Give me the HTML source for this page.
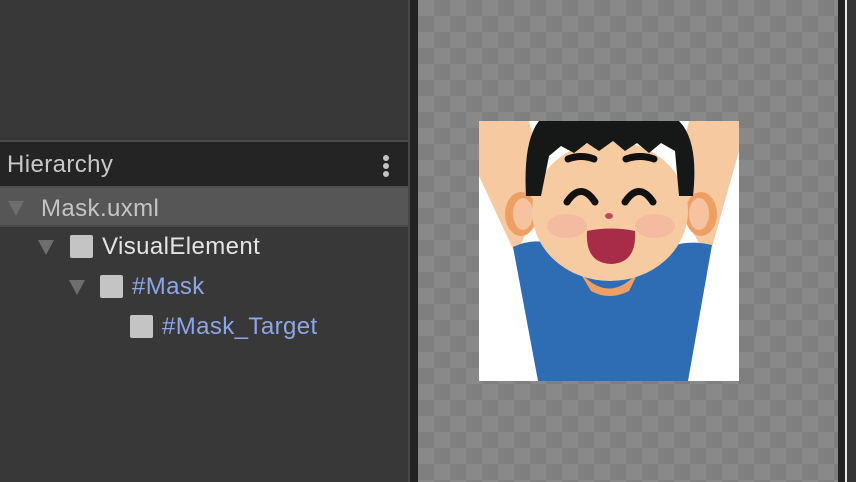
<!DOCTYPE html>
<html><head><style>
body{margin:0;width:856px;height:482px;overflow:hidden;background:#383838;font-family:"Liberation Sans",sans-serif;position:relative}
.a{position:absolute}
.tri{position:absolute;width:0;height:0;border-left:8px solid transparent;border-right:8px solid transparent;border-top:15px solid #6e6e6e}
.box{position:absolute;width:23px;height:23px;background:#c4c4c4;border-radius:2px}
.t{position:absolute;font-size:24px;line-height:24px;letter-spacing:0.4px}
</style></head><body>
<div class="a" style="left:0;top:0;width:408px;height:482px;background:#383838"></div>
<div class="a" style="left:0;top:140px;width:408px;height:2px;background:#4a4a4a"></div>
<div class="a" style="left:0;top:142px;width:408px;height:44px;background:#242424"></div>
<div class="a" style="left:0;top:186px;width:408px;height:2px;background:#4f4f4f"></div>
<div class="a" style="left:0;top:188px;width:408px;height:37px;background:#565656"></div>
<div class="a" style="left:0;top:225px;width:408px;height:2px;background:#4a4a4a"></div>
<div class="a" style="left:408px;top:0;width:2px;height:482px;background:#484848"></div>
<div class="a" style="left:410px;top:0;width:8px;height:482px;background:#232323"></div>
<div class="a" style="left:418px;top:0;width:420px;height:482px;background-color:#898989;background-image:linear-gradient(45deg,#7f7f7f 25%,transparent 25%,transparent 75%,#7f7f7f 75%),linear-gradient(45deg,#7f7f7f 25%,transparent 25%,transparent 75%,#7f7f7f 75%);background-size:32px 32px;background-position:0 0,16px 16px"></div>
<div class="a" style="left:838px;top:0;width:8px;height:482px;background:#222"></div>
<div class="a" style="left:845px;top:0;width:2px;height:482px;background:#e8e8e8"></div>
<div class="a" style="left:847px;top:0;width:9px;height:482px;background:#353535"></div>

<div class="t" style="left:7px;top:153px;color:#c8c8c8">Hierarchy</div>
<div class="a" style="left:383px;top:155px;width:6px;height:6px;border-radius:3px;background:#c4c4c4"></div>
<div class="a" style="left:383px;top:163px;width:6px;height:6px;border-radius:3px;background:#c4c4c4"></div>
<div class="a" style="left:383px;top:171px;width:6px;height:6px;border-radius:3px;background:#c4c4c4"></div>

<div class="tri" style="left:8px;top:201px"></div>
<div class="t" style="left:41px;top:197px;color:#c4c4c4">Mask.uxml</div>
<div class="tri" style="left:38px;top:240px"></div>
<div class="box" style="left:70px;top:235px"></div>
<div class="t" style="left:102px;top:235px;color:#e4e4e4">VisualElement</div>
<div class="tri" style="left:69px;top:280px"></div>
<div class="box" style="left:100px;top:275px"></div>
<div class="t" style="left:132px;top:275px;color:#8ca6e8">#Mask</div>
<div class="box" style="left:130px;top:315px"></div>
<div class="t" style="left:162px;top:315px;color:#8ca6e8">#Mask_Target</div>

<svg class="a" style="left:479px;top:121px" width="260" height="260" viewBox="0 0 260 260">
<rect width="260" height="260" fill="#fff"/>
<path d="M0 0 L50 0 L60 40 L52 100 L40 128 L34 128 L0 55 Z" fill="#f7c9a0"/>
<path d="M260 0 L210 0 L200 40 L208 100 L222 126 L233 126 L260 30 Z" fill="#f7c9a0"/>
<path d="M34 126 Q70 110 90 140 Q130 170 170 140 Q195 115 233 124 L209 260 L59 260 Z" fill="#2e6db4"/>
<path d="M100 150 Q130 185 160 150 L150 170 Q130 180 112 170 Z" fill="#eea064"/>
<ellipse cx="42" cy="93" rx="16" ry="22" fill="#eea064"/>
<ellipse cx="222" cy="93" rx="16" ry="22" fill="#eea064"/>
<ellipse cx="44" cy="93" rx="10" ry="16" fill="#f6c2a0"/>
<ellipse cx="220" cy="93" rx="10" ry="16" fill="#f6c2a0"/>
<ellipse cx="131" cy="90" rx="78" ry="70" fill="#f7cba2"/>
<path d="M47 75 Q44 20 60 0 L200 0 Q220 20 214 75 L200 75 L196 30 L182 22 L170 32 L158 22 L146 30 L134 20 L120 30 L108 22 L95 32 L82 25 L70 35 L62 75 Z" fill="#151816"/>
<ellipse cx="88" cy="105" rx="20" ry="12" fill="#f4b0a0" opacity=".6"/>
<ellipse cx="176" cy="105" rx="20" ry="12" fill="#f4b0a0" opacity=".6"/>
<path d="M89 38 Q102 33 115 38" stroke="#111" stroke-width="7" fill="none" stroke-linecap="round"/>
<path d="M147 38 Q161 33 175 38" stroke="#111" stroke-width="7" fill="none" stroke-linecap="round"/>
<path d="M88 81 Q102 60 116 81" stroke="#111" stroke-width="7" fill="none" stroke-linecap="round"/>
<path d="M146 81 Q160 60 174 81" stroke="#111" stroke-width="7" fill="none" stroke-linecap="round"/>
<ellipse cx="130" cy="95" rx="4" ry="3" fill="#c04a5a"/>
<path d="M108 110 Q132 105 156 110 Q158 142 132 143 Q106 142 108 110 Z" fill="#a82c48"/>
</svg>
</body></html>
